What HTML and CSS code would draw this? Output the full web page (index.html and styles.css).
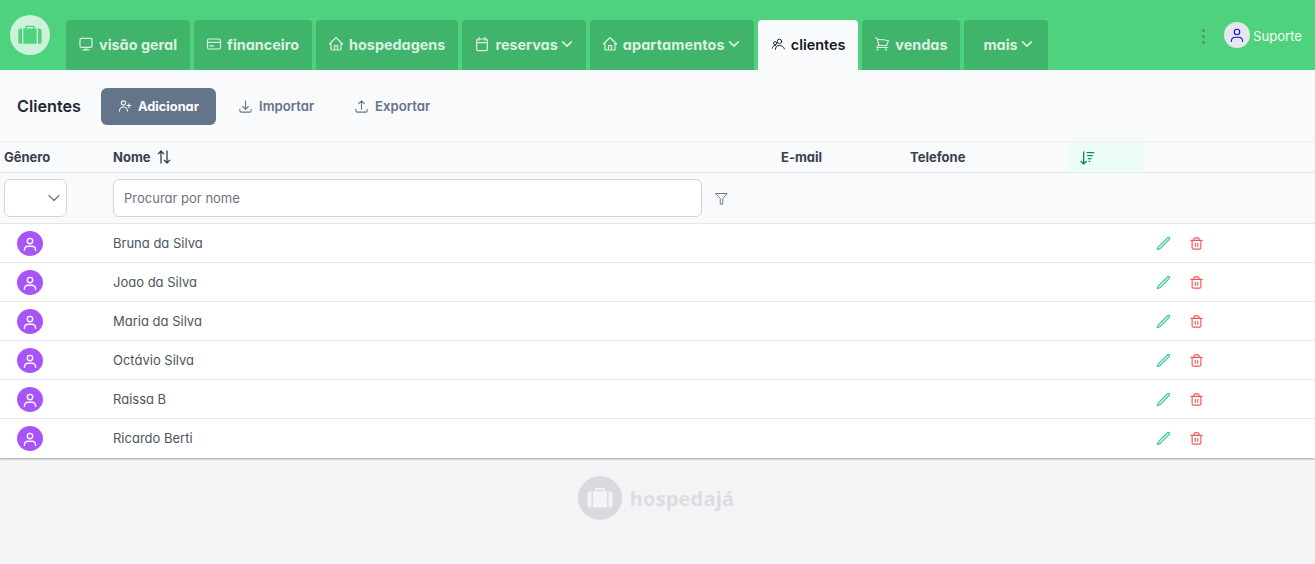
FILE: index.html
```html
<!DOCTYPE html>
<html lang="pt-BR">
<head>
<meta charset="utf-8">
<title>Clientes</title>
<link rel="stylesheet" href="styles.css">
</head>
<body>
<svg class="defs" aria-hidden="true">
  <symbol id="i-desktop" viewBox="0 0 24 24"><path d="M5 3.500h14a2 2 0 012 2V15a2 2 0 01-2 2H5a2 2 0 01-2-2V5.500a2 2 0 012-2zM12 17v3.500M7.500 20.750h9"/></symbol>
  <symbol id="i-card" viewBox="0 0 24 24"><path d="M2.250 9.500h19.500m-16.500 5.250h6M4.500 19.500h15a2.250 2.250 0 002.250-2.250V6.750A2.250 2.250 0 0019.500 4.500h-15a2.250 2.250 0 00-2.250 2.250v10.500A2.250 2.250 0 004.500 19.500z"/></symbol>
  <symbol id="i-home" viewBox="0 0 24 24"><path d="M2.250 12l8.954-8.955c.44-.439 1.152-.439 1.591 0L21.750 12M4.500 9.750v10.125c0 .621.504 1.125 1.125 1.125H9.750v-6.500h4.500V21h4.125c.621 0 1.125-.504 1.125-1.125V9.750M8.250 21h8.250"/></symbol>
  <symbol id="i-cal" viewBox="0 0 24 24"><path d="M7.500 2.500v4M16.500 2.500v4M6 4.500h12a2 2 0 012 2V20a2 2 0 01-2 2H6a2 2 0 01-2-2V6.500a2 2 0 012-2zM4 10h16"/></symbol>
  <symbol id="i-users" viewBox="0 0 24 24"><circle cx="13.500" cy="7" r="3.500"/><circle cx="6.500" cy="10" r="2.500"/><path d="M7 20c0-4 3-6.500 6.500-6.500S20.500 16 21.500 19M2 18c0-2.500 2-4.500 5.500-4.500"/></symbol>
  <symbol id="i-cart" viewBox="0 0 24 24"><path d="M2.250 3h1.386c.51 0 .955.343 1.087.835l.383 1.437M7.500 14.250a3 3 0 00-3 3h15.750m-12.750-3h11.218c1.121-2.300 2.100-4.684 2.924-7.138a60.114 60.114 0 00-16.536-1.840M7.500 14.250L5.106 5.272M6 20.250a.75.75 0 11-1.500 0 .75.75 0 011.500 0zm12.750 0a.75.75 0 11-1.500 0 .75.75 0 011.500 0z"/></symbol>
  <symbol id="i-chev" viewBox="0 0 24 24"><path d="M4.500 8.250l7.500 7.500 7.500-7.500"/></symbol>
  <symbol id="i-user" viewBox="0 0 24 24"><circle cx="12" cy="8" r="3.600"/><path d="M4.500 20.500c0-3.600 2.600-5.500 5.200-5.500h4.600c2.600 0 5.200 1.900 5.200 5.500"/></symbol>
  <symbol id="i-add" viewBox="0 0 24 24"><path d="M19 7.500v3m0 0v3m0-3h3m-3 0h-3m-2.250-4.125a3.375 3.375 0 11-6.750 0 3.375 3.375 0 016.750 0zM4 19.235v-.11a6.375 6.375 0 0112.750 0v.109"/></symbol>
  <symbol id="i-down" viewBox="0 0 24 24"><path d="M3 16.500v2.250A2.250 2.250 0 005.250 21h13.500A2.250 2.250 0 0021 18.750V16.500M16.500 12L12 16.500m0 0L7.500 12m4.500 4.500V3"/></symbol>
  <symbol id="i-up" viewBox="0 0 24 24"><path d="M3 16.500v2.250A2.250 2.250 0 005.250 21h13.500A2.250 2.250 0 0021 18.750V16.500m-13.500-9L12 3m0 0l4.500 4.500M12 3v13.500"/></symbol>
  <symbol id="i-sort" viewBox="0 0 24 24"><path d="M7.500 21V3m0 0l-4 4m4-4l4 4M16.500 3v18m0 0l-4-4m4 4l4-4"/></symbol>
  <symbol id="i-sortf" viewBox="0 0 24 24"><path d="M7 3v18m0 0l-4-4m4 4l4-4M12 4h10M13 8.500h7M14 13h4M15 17h1"/></symbol>
  <symbol id="i-funnel" viewBox="0 0 24 24"><path d="M3 4h18l-7 8.500V21h-4v-8.500z"/></symbol>
  <symbol id="i-pencil" viewBox="0 0 24 24"><path d="M16.862 4.487l1.687-1.688a1.875 1.875 0 112.652 2.652L6.832 19.820a4.500 4.500 0 01-1.897 1.130l-2.685.8.8-2.685a4.500 4.500 0 011.130-1.897L16.863 4.487z"/></symbol>
  <symbol id="i-trash" viewBox="0 0 24 24"><path d="M3 7h18M8 7V4.500A1.500 1.500 0 019.500 3h5A1.500 1.500 0 0116 4.500V7M5 7v12a2 2 0 002 2h10a2 2 0 002-2V7M10 11.500v5M14 11.500v5"/></symbol>
  <symbol id="i-bag" viewBox="0 0 24 24"><path class="solid" d="M8 6.500V5.200C8 4.500 8.500 4 9.200 4h5.600c.7 0 1.200.5 1.200 1.200v1.300h-1.200V5.200H9.200v1.300zM6.300 6.500h11.400V19.500H6.300zM2 8.500c0-1.100.9-2 2-2h1.200v13H4c-1.100 0-2-.9-2-2zM22 8.500c0-1.100-.9-2-2-2h-1.200v13H20c1.100 0 2-.9 2-2z"/></symbol>
</svg>

<header class="topbar">
  <div class="logo"><svg class="logo-bag"><use href="#i-bag"/></svg></div>
  <nav class="tabs">
    <a class="tab"><svg class="ic"><use href="#i-desktop"/></svg>visão geral</a>
    <a class="tab"><svg class="ic"><use href="#i-card"/></svg>financeiro</a>
    <a class="tab"><svg class="ic"><use href="#i-home"/></svg>hospedagens</a>
    <a class="tab"><svg class="ic"><use href="#i-cal"/></svg>reservas<svg class="chev"><use href="#i-chev"/></svg></a>
    <a class="tab wide"><svg class="ic"><use href="#i-home"/></svg>apartamentos<svg class="chev"><use href="#i-chev"/></svg></a>
    <a class="tab active"><svg class="ic"><use href="#i-users"/></svg>clientes</a>
    <a class="tab"><svg class="ic"><use href="#i-cart"/></svg>vendas</a>
    <a class="tab more">mais<svg class="chev"><use href="#i-chev"/></svg></a>
  </nav>
  <div class="account">
    <div class="dots"><i></i><i></i><i></i></div>
    <div class="account-avatar"><svg class="account-icon"><use href="#i-user"/></svg></div>
    <span class="account-name">Suporte</span>
  </div>
</header>

<main class="content">
  <div class="toolbar">
    <h1 class="title">Clientes</h1>
    <button class="btn primary"><svg class="btn-ic"><use href="#i-add"/></svg>Adicionar</button>
    <button class="btn ghost"><svg class="btn-ic"><use href="#i-down"/></svg>Importar</button>
    <button class="btn ghost"><svg class="btn-ic"><use href="#i-up"/></svg>Exportar</button>
  </div>

  <section class="table">
    <div class="row head">
      <div class="cell first">Gênero</div>
      <div class="cell">Nome<svg class="sort"><use href="#i-sort"/></svg></div>
      <div class="cell">E-mail</div>
      <div class="cell">Telefone</div>
      <div class="cell sortcell"><svg class="sortf"><use href="#i-sortf"/></svg></div>
      <div class="cell"></div>
    </div>
    <div class="row filters">
      <div class="cell first"><div class="select"><svg class="select-chev"><use href="#i-chev"/></svg></div></div>
      <div class="cell search-cell">
        <input class="search" type="text" placeholder="Procurar por nome">
        <svg class="funnel"><use href="#i-funnel"/></svg>
      </div>
    </div>
    <div class="row item"><div class="cell"><span class="avatar"><svg class="avatar-ic"><use href="#i-user"/></svg></span></div><div class="cell">Bruna da Silva</div><div class="cell"></div><div class="cell"></div><div class="cell"></div><div class="cell actions"><svg class="pencil"><use href="#i-pencil"/></svg><svg class="trash"><use href="#i-trash"/></svg></div></div>
    <div class="row item"><div class="cell"><span class="avatar"><svg class="avatar-ic"><use href="#i-user"/></svg></span></div><div class="cell">Joao da Silva</div><div class="cell"></div><div class="cell"></div><div class="cell"></div><div class="cell actions"><svg class="pencil"><use href="#i-pencil"/></svg><svg class="trash"><use href="#i-trash"/></svg></div></div>
    <div class="row item"><div class="cell"><span class="avatar"><svg class="avatar-ic"><use href="#i-user"/></svg></span></div><div class="cell">Maria da Silva</div><div class="cell"></div><div class="cell"></div><div class="cell"></div><div class="cell actions"><svg class="pencil"><use href="#i-pencil"/></svg><svg class="trash"><use href="#i-trash"/></svg></div></div>
    <div class="row item"><div class="cell"><span class="avatar"><svg class="avatar-ic"><use href="#i-user"/></svg></span></div><div class="cell">Octávio Silva</div><div class="cell"></div><div class="cell"></div><div class="cell"></div><div class="cell actions"><svg class="pencil"><use href="#i-pencil"/></svg><svg class="trash"><use href="#i-trash"/></svg></div></div>
    <div class="row item"><div class="cell"><span class="avatar"><svg class="avatar-ic"><use href="#i-user"/></svg></span></div><div class="cell">Raissa B</div><div class="cell"></div><div class="cell"></div><div class="cell"></div><div class="cell actions"><svg class="pencil"><use href="#i-pencil"/></svg><svg class="trash"><use href="#i-trash"/></svg></div></div>
    <div class="row item last"><div class="cell"><span class="avatar"><svg class="avatar-ic"><use href="#i-user"/></svg></span></div><div class="cell">Ricardo Berti</div><div class="cell"></div><div class="cell"></div><div class="cell"></div><div class="cell actions"><svg class="pencil"><use href="#i-pencil"/></svg><svg class="trash"><use href="#i-trash"/></svg></div></div>
  </section>

  <footer class="brand">
    <div class="brand-logo"><svg class="brand-bag"><use href="#i-bag"/></svg></div>
    <span class="brand-name">hospedajá</span>
  </footer>
</main>
</body>
</html>
```
FILE: styles.css
```css
* { box-sizing: border-box; }
html, body { margin: 0; height: 100%; }
body {
  font-family: "Inter", "Liberation Sans", sans-serif;
  font-feature-settings: "cv11" 1;
  background: #f3f4f6;
  color: #111827;
  overflow: hidden;
}
.defs { display: none; }
svg { fill: none; stroke: currentColor; stroke-width: 1.5; stroke-linecap: round; stroke-linejoin: round; display: block; flex: none; }
.solid { fill: currentColor; stroke: none; }

.topbar { height: 70px; background: #4fd27e; display: flex; padding-left: 10px; }
.logo { width: 40px; height: 40px; margin-top: 15px; border-radius: 50%; background: #cdf2da; color: #4fd27e; display: flex; align-items: center; justify-content: center; }
.logo-bag { width: 28px; height: 28px; }
.tabs { display: flex; gap: 4px; margin: 20px 0 0 16px; }
.tab { height: 50px; padding: 0 13px 2px 12px; display: flex; align-items: center; background: #41b46c; color: #dcefe2; border-radius: 4px 4px 0 0; font-size: 14.400px; font-weight: 700; }
.tab.wide { letter-spacing: .150px; padding-right: 14px; }
.tab.active { background: #f9fafb; color: #111827; font-weight: 600; }
.tab.more { padding: 0 15px 2px 19px; }
.ic { width: 16px; height: 16px; margin-right: 5px; stroke-width: 1.800; }
.tab.active .ic { width: 15px; height: 15px; margin: 0 5px 0 1px; stroke-width: 1.500; }
.chev { width: 14px; height: 14px; margin: 0 -1px 0 2px; stroke-width: 2.800; }
.account { margin-left: auto; display: flex; align-items: flex-start; padding: 22px 13px 0 0; }
.dots { display: flex; flex-direction: column; gap: 3px; margin: 7px 19px 0 0; }
.dots i { display: block; width: 3px; height: 3px; border-radius: 50%; background: #5f8a79; }
.account-avatar { width: 26px; height: 26px; border-radius: 50%; background: #e5e7eb; color: #1d0fe0; display: flex; align-items: center; justify-content: center; }
.account-icon { width: 18px; height: 18px; }
.account-name { margin: 6px 0 0 3px; font-size: 13.100px; color: #f4fbf6; }

.content { display: flex; flex-direction: column; }
.toolbar { height: 72px; background: #f9fafb; display: flex; align-items: center; padding: 0 0 0 17px; }
.title { margin: 0 20px 0 0; font-size: 16.200px; font-weight: 600; color: #1f2937; width: 64px; white-space: nowrap; }
.btn { height: 37px; border: 0; border-radius: 6px; display: flex; align-items: center; font: inherit; font-size: 13px; font-feature-settings: "cv11" 1; background: none; }
.btn.primary { width: 115px; padding: 0 0 0 16px; background: #64748b; color: #fff; font-weight: 700; font-size: 12.800px; }
.btn.ghost { padding: 0 0 0 22px; width: 116px; color: #64748b; font-weight: 600; font-size: 13.200px; }
.btn-ic { width: 15px; height: 15px; margin-right: 6px; stroke-width: 1.700; }

.table { background: #fff; box-shadow: 0 1px 2px rgba(0,0,0,.35); }
.row { display: grid; grid-template-columns: 109px 668px 129px 163px 75px 1fr; font-size: 13px; }
.cell { padding-left: 4px; display: flex; align-items: center; min-width: 0; }
.head { height: 31px; padding-bottom: 1px; background: #f9fafb; border-top: 1px solid #f1f3f5; border-bottom: 1px solid #e5e7eb; font-weight: 700; color: #374151; }
.sort { width: 16px; height: 16px; margin-left: 5px; color: #374151; stroke-width: 2; }
.sortcell { background: #ecfdf5; padding-left: 10px; margin-bottom: -1px; }
.sortf { width: 16px; height: 16px; color: #0f8a5f; stroke-width: 2; }
.filters { height: 51px; background: #f9fafb; border-bottom: 1px solid #e5e7eb; }
.select { width: 63px; height: 38px; background: #fff; border: 1px solid #d1d5db; border-radius: 6px; display: flex; align-items: center; justify-content: flex-end; padding-right: 4px; color: #6b7280; }
.select-chev { width: 16px; height: 16px; stroke-width: 1.800; }
.search-cell { grid-column: 2 / -1; }
.search { width: 589px; height: 38px; background: #fff; border: 1px solid #d1d5db; border-radius: 6px; padding: 0 10px; font: inherit; font-size: 13px; font-feature-settings: "cv11" 1; color: #374151; }
.search::placeholder { color: #6b7280; opacity: 1; }
.funnel { width: 15px; height: 15px; margin-left: 12px; color: #6b7280; }
.item { height: 39px; border-bottom: 1px solid #e5e7eb; color: #4b5563; }
.item.last { border-bottom-color: #fff; }
.avatar { width: 26px; height: 25px; margin: 1px 0 0 13px; border-radius: 50%; background: #a855f7; color: #fff; display: flex; align-items: center; justify-content: center; }
.avatar-ic { width: 18px; height: 18px; stroke-width: 1.800; }
.actions { padding-left: 12px; gap: 18px; }
.pencil { width: 15px; height: 15px; color: #1fc493; stroke-width: 1.700; }
.trash { width: 15px; height: 15px; color: #f25555; stroke-width: 1.800; }

.brand { display: flex; align-items: center; justify-content: center; gap: 8px; margin: 18px 3px 0 0; }
.brand-logo { width: 44px; height: 44px; border-radius: 50%; background: #d9dadd; color: #f3f4f6; display: flex; align-items: center; justify-content: center; }
.brand-bag { width: 30px; height: 30px; }
.brand-name { font-family: "Open Sans", sans-serif; font-weight: 700; font-size: 20px; letter-spacing: .170px; color: #dcdde0; }
```
